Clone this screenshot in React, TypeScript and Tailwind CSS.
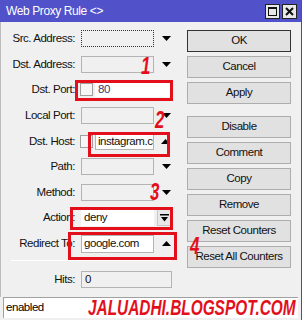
import React from "react";

function Down() {
  return (
    <svg width="9" height="5" viewBox="0 0 9 5" className="block">
      <path d="M0 0H9L4.5 5Z" fill="#000" />
    </svg>
  );
}
function Up() {
  return (
    <svg width="9" height="5" viewBox="0 0 9 5" className="block">
      <path d="M0 5H9L4.5 0Z" fill="#000" />
    </svg>
  );
}
function BarDown() {
  return (
    <svg width="9" height="8" viewBox="0 0 9 8" className="block">
      <rect x="0" y="0" width="9" height="1.5" fill="#000" />
      <path d="M1 3H8L4.5 7.5Z" fill="#000" />
    </svg>
  );
}

function Label({ children }: { children: React.ReactNode }) {
  return <div className="w-[74px] shrink-0 text-right whitespace-nowrap">{children}</div>;
}

function GrayField({ dotted = false }: { dotted?: boolean }) {
  return (
    <div
      className={`w-[73px] h-[17px] bg-[#f0f0f0] ${
        dotted ? "border border-dotted border-[#333]" : "border border-[#b4b4b4]"
      }`}
    />
  );
}

function Row({ label, children }: { label: React.ReactNode; children: React.ReactNode }) {
  return (
    <div className="flex h-[25.6px] items-center">
      <Label>{label}</Label>
      <div className="ml-[6px] flex items-center">{children}</div>
    </div>
  );
}

function Btn({ children, def = false }: { children: React.ReactNode; def?: boolean }) {
  return (
    <div
      className={`flex h-[22px] w-[104px] items-center justify-center bg-[#e1e1e1] ${
        def ? "border border-[#333]" : "border border-[#adadad]"
      }`}
    >
      {children}
    </div>
  );
}

export default function App() {
  return (
    <div className="relative flex h-[320px] w-[302px] flex-col overflow-hidden border-r border-[#555] bg-[#f0f0f0] font-['Liberation_Sans',Arial,sans-serif] text-[11.5px] tracking-[-0.45px] text-[#111]">
      {/* title bar */}
      <div className="flex h-[22px] shrink-0 items-center bg-[#5151c9] pl-[6px] pr-[4px]">
        <div className="text-[12px] tracking-[-0.4px] text-white">Web Proxy Rule &lt;&gt;</div>
        <div className="ml-auto flex gap-[2px]">
          <div className="flex h-[15px] w-[15px] items-center justify-center border border-[#222] bg-[#e8e8e8]">
            <div className="h-[9px] w-[9px] border border-[#111] border-t-2" />
          </div>
          <div className="flex h-[15px] w-[15px] items-center justify-center border border-[#222] bg-[#e8e8e8]">
            <svg width="9" height="9" viewBox="0 0 9 9">
              <path d="M1 1L8 8M8 1L1 8" stroke="#111" strokeWidth="2" />
            </svg>
          </div>
        </div>
      </div>

      {/* body */}
      <div className="flex flex-1 border-l border-[#bdbdbd]">
        {/* form */}
        <div className="flex w-[186px] flex-col pt-[4px]">
          <Row label="Src. Address:">
            <GrayField dotted />
            <div className="ml-[8px]"><Down /></div>
          </Row>
          <Row label="Dst. Address:">
            <GrayField />
            <div className="ml-[8px]"><Down /></div>
          </Row>
          <Row label="Dst. Port:">
            <div className="-ml-[1px] h-[13px] w-[13px] border border-[#a0a0a0] bg-[#f6f6f6]" />
            <div className="ml-[2px] flex h-[15px] w-[76px] items-center bg-white pl-[3px] text-[#3b3b6b]">80</div>
          </Row>
          <Row label="Local Port:">
            <GrayField />
            <div className="ml-[8px]"><Down /></div>
          </Row>
          <Row label="Dst. Host:">
            <div className="-ml-[1px] h-[13px] w-[13px] border border-[#a0a0a0] bg-[#f6f6f6]" />
            <div className="ml-[2px] flex h-[17px] w-[59px] items-center overflow-hidden border border-[#b4b4b4] bg-white pl-[2px] whitespace-nowrap">
              instagram.com
            </div>
            <div className="ml-[7px]"><Up /></div>
          </Row>
          <Row label="Path:">
            <GrayField />
            <div className="ml-[8px]"><Down /></div>
          </Row>
          <Row label="Method:">
            <GrayField />
            <div className="ml-[8px]"><Down /></div>
          </Row>
          <Row label="Action:">
            <div className="flex h-[17px] w-[73px] items-center bg-white pl-[3px]">deny</div>
            <div className="ml-[3px] flex h-[17px] w-[15px] items-center justify-center border border-[#c8c8c8] bg-[#e8e8e8]">
              <BarDown />
            </div>
          </Row>
          <Row label="Redirect To:">
            <div className="flex h-[18px] w-[73px] items-center border border-[#b4b4b4] bg-white pl-[2px]">google.com</div>
            <div className="ml-[8px]"><Up /></div>
          </Row>
          <div className="ml-[10px] mt-[4px] h-[1px] w-[160px] border-b border-white bg-[#c8c8c8]" />
          <div className="mt-[10px] flex h-[16px] items-center">
            <Label>Hits:</Label>
            <div className="ml-[6px] flex h-[17px] w-[91px] items-center border border-[#b4b4b4] bg-[#f0f0f0] pl-[3px]">0</div>
          </div>
        </div>

        {/* buttons */}
        <div className="flex flex-col gap-[4px] pt-[8px]">
          <Btn def>OK</Btn>
          <Btn>Cancel</Btn>
          <Btn>Apply</Btn>
          <div className="h-[4px]" />
          <Btn>Disable</Btn>
          <Btn>Comment</Btn>
          <Btn>Copy</Btn>
          <Btn>Remove</Btn>
          <Btn>Reset Counters</Btn>
          <Btn>Reset All Counters</Btn>
        </div>
      </div>

      {/* status bar */}
      <div className="mx-[3px] mb-[2px] flex h-[21px] shrink-0 items-center border-t border-l border-[#a0a0a0] bg-white pl-[2px] text-black">
        enabled
      </div>

      {/* annotations */}
      <div className="pointer-events-none absolute left-[75px] top-[80px] h-[21px] w-[98px] border-[3px] border-[#e3101b]" />
      <div className="pointer-events-none absolute left-[88px] top-[132px] h-[25px] w-[82px] border-[3px] border-[#e3101b]" />
      <div className="pointer-events-none absolute left-[70px] top-[207px] h-[23px] w-[103px] border-[3px] border-[#e3101b]" />
      <div className="pointer-events-none absolute left-[68px] top-[232px] h-[28px] w-[109px] border-[3px] border-[#e3101b]" />

      <div className="pointer-events-none absolute left-[141px] top-[54px] origin-left scale-x-[0.7] text-[24px] font-bold italic leading-none tracking-normal text-[#e3101b]">1</div>
      <div className="pointer-events-none absolute left-[155px] top-[108px] origin-left scale-x-[0.7] text-[24px] font-bold italic leading-none tracking-normal text-[#e3101b]">2</div>
      <div className="pointer-events-none absolute left-[150px] top-[180px] origin-left scale-x-[0.7] text-[24px] font-bold italic leading-none tracking-normal text-[#e3101b]">3</div>
      <div className="pointer-events-none absolute left-[190px] top-[234px] origin-left scale-x-[0.7] text-[24px] font-bold italic leading-none tracking-normal text-[#e3101b]">4</div>

      <div className="pointer-events-none absolute left-[88px] top-[297px] origin-left scale-x-[0.7] whitespace-nowrap text-[22px] font-bold italic leading-none tracking-normal text-[#e3101b]">
        JALUADHI.BLOGSPOT.COM
      </div>
    </div>
  );
}
